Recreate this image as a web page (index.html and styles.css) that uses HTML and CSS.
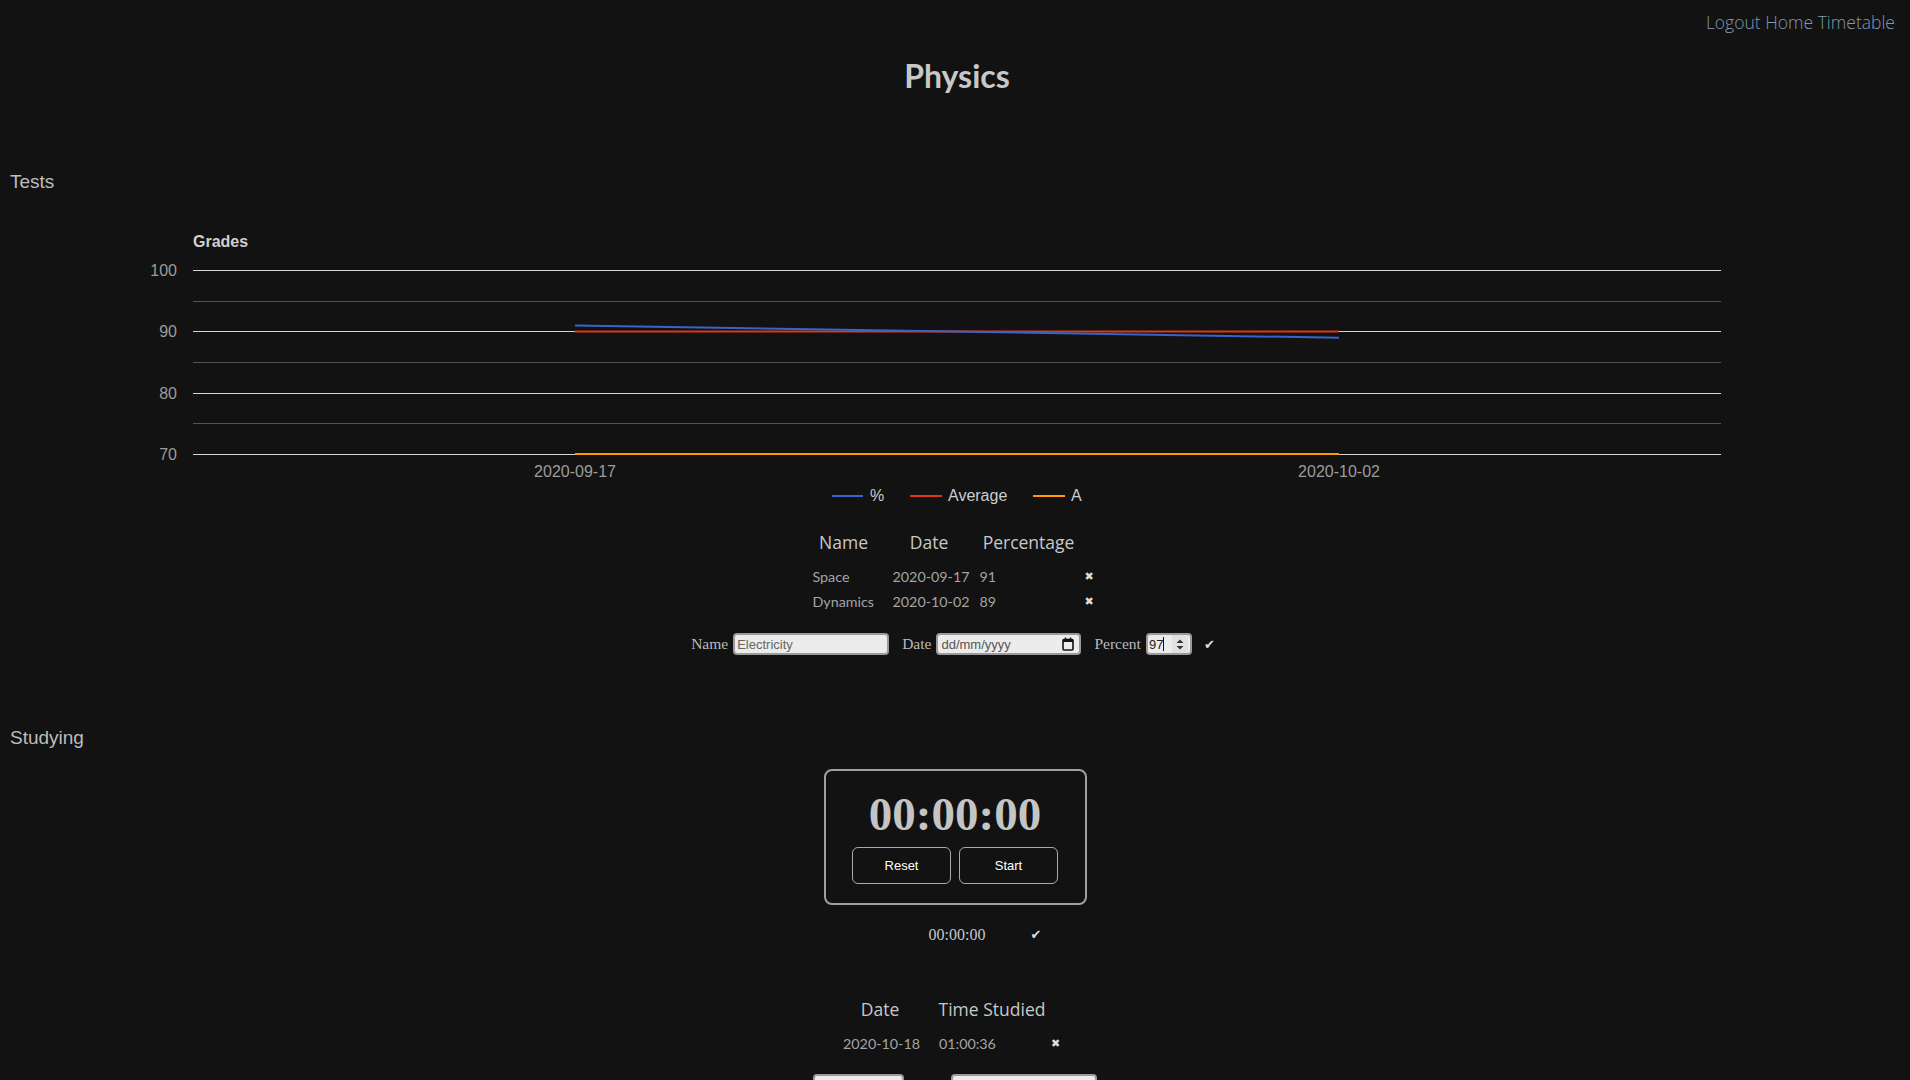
FILE: index.html
```html
<!DOCTYPE html>
<html lang="en">
<head>
<meta charset="utf-8">
<title>Physics</title>
<link rel="stylesheet" href="styles.css">
</head>
<body>
<nav class="topnav"><a href="#">Logout</a> <a href="#">Home</a> <a href="#">Timetable</a></nav>
<h1 class="title">Physics</h1>

<section class="tests">
  <h2 class="section-title">Tests</h2>
  <svg class="chart" width="1910" height="315" viewBox="0 0 1910 315">
    <text x="193" y="47" class="chart-title">Grades</text>
    <g class="grid-major">
      <line x1="193" x2="1721" y1="70.5" y2="70.5"/>
      <line x1="193" x2="1721" y1="131.5" y2="131.5"/>
      <line x1="193" x2="1721" y1="193.5" y2="193.5"/>
      <line x1="193" x2="1721" y1="254.5" y2="254.5"/>
    </g>
    <g class="grid-minor">
      <line x1="193" x2="1721" y1="101.5" y2="101.5"/>
      <line x1="193" x2="1721" y1="162.5" y2="162.5"/>
      <line x1="193" x2="1721" y1="223.5" y2="223.5"/>
    </g>
    <g class="axis-label">
      <text x="177" y="76" text-anchor="end">100</text>
      <text x="177" y="137" text-anchor="end">90</text>
      <text x="177" y="199" text-anchor="end">80</text>
      <text x="177" y="260" text-anchor="end">70</text>
      <text x="575" y="277" text-anchor="middle">2020-09-17</text>
      <text x="1339" y="277" text-anchor="middle">2020-10-02</text>
    </g>
    <line class="series-a" x1="575" x2="1339" y1="254" y2="254"/>
    <line class="series-avg" x1="575" x2="1339" y1="131.5" y2="131.5"/>
    <line class="series-pct" x1="575" x2="1339" y1="125.5" y2="137.7"/>
    <g class="legend">
      <line class="series-pct" x1="832" x2="863" y1="296" y2="296"/>
      <text x="870" y="301">%</text>
      <line class="series-avg" x1="910" x2="942" y1="296" y2="296"/>
      <text x="948" y="301">Average</text>
      <line class="series-a" x1="1033" x2="1065" y1="296" y2="296"/>
      <text x="1071" y="301">A</text>
    </g>
  </svg>

  <table class="data-table grades">
    <thead>
      <tr><th class="c-name">Name</th><th class="c-date">Date</th><th class="c-pct">Percentage</th><th class="c-del"></th></tr>
    </thead>
    <tbody>
      <tr><td>Space</td><td>2020-09-17</td><td>91</td><td class="del">&#10006;</td></tr>
      <tr><td>Dynamics</td><td>2020-10-02</td><td>89</td><td class="del">&#10006;</td></tr>
    </tbody>
  </table>

  <form class="add-row">
    <label class="field"><span class="lbl">Name</span><input class="txt name-input" type="text" placeholder="Electricity"></label>
    <label class="field"><span class="lbl">Date</span>
      <span class="fake-input date-input"><span class="ph">dd/mm/yyyy</span>
        <svg class="cal" width="12" height="14" viewBox="0 0 12 14"><rect x="1" y="2.5" width="10" height="10.5" rx="1" fill="none" stroke="#111" stroke-width="1.6"/><rect x="1" y="2.5" width="10" height="2.5" fill="#111"/><line x1="3.5" y1="0.5" x2="3.5" y2="3" stroke="#111" stroke-width="1.4"/><line x1="8.5" y1="0.5" x2="8.5" y2="3" stroke="#111" stroke-width="1.4"/></svg>
      </span>
    </label>
    <label class="field"><span class="lbl">Percent</span>
      <span class="fake-input num-input"><span class="val">97</span><span class="caret"></span>
        <span class="spin"><svg width="8" height="11" viewBox="0 0 8 11"><path d="M4 0.5 L7.5 4 L0.5 4 Z M4 10.5 L7.5 7 L0.5 7 Z" fill="#333"/></svg></span>
      </span>
    </label>
    <span class="tick submit">&#10004;</span>
  </form>
</section>

<section class="studying">
  <h2 class="section-title studying-title">Studying</h2>
  <div class="timer">
    <div class="timer-display">00:00:00</div>
    <div class="timer-buttons"><button type="button">Reset</button><button type="button">Start</button></div>
  </div>
  <div class="log-row"><span class="spacer"></span><span class="log-time">00:00:00</span><span class="tick log-tick">&#10004;</span></div>

  <table class="data-table sessions">
    <thead>
      <tr><th class="s-date">Date</th><th class="s-time">Time Studied</th><th class="s-del"></th></tr>
    </thead>
    <tbody>
      <tr><td>2020-10-18</td><td>01:00:36</td><td class="del">&#10006;</td></tr>
    </tbody>
  </table>

  <div class="bottom-inputs">
    <span class="box box-small"></span>
    <span class="box box-wide"></span>
  </div>
</section>
</body>
</html>
```

FILE: styles.css
```css
body {
  margin: 0;
  background: #121212;
  color: #cccccc;
  font-family: "Liberation Sans", Arial, sans-serif;
}

.topnav {
  text-align: right;
  padding: 10px 15px 0 0;
  height: 24px;
  line-height: 24px;
  font-family: "Open Sans", "Liberation Sans", sans-serif;
  font-weight: 300;
  font-size: 17.5px;
}
.topnav a {
  color: #7f98b1;
  text-decoration: none;
}

.title {
  margin: 22px 0 0;
  padding-left: 4px;
  text-align: center;
  font-family: Lato, "Liberation Sans", sans-serif;
  font-weight: 700;
  font-size: 32px;
  line-height: 40px;
  color: #c8c8c8;
}

.section-title {
  margin: 74px 0 0;
  padding-left: 10px;
  font-family: "Liberation Sans", Arial, sans-serif;
  font-weight: 400;
  font-size: 19px;
  line-height: 24px;
  color: #bdbdbd;
}
.studying-title {
  margin-top: 70px;
}

/* chart */
.chart {
  display: block;
  margin-top: 6px;
  font-family: "Liberation Sans", Arial, sans-serif;
}
.chart-title {
  font-size: 16px;
  font-weight: 700;
  fill: #cfcfcf;
}
.grid-major line {
  stroke: #d6d6d6;
  stroke-width: 1;
}
.grid-minor line {
  stroke: #555555;
  stroke-width: 1;
}
.axis-label text {
  font-size: 16px;
  fill: #9c9c9c;
}
.legend text {
  font-size: 16px;
  fill: #cccccc;
}
.series-pct { stroke: #3366cc; stroke-width: 2; }
.series-avg { stroke: #dc3912; stroke-width: 2; }
.series-a { stroke: #ff9900; stroke-width: 2; }

/* tables */
.data-table {
  margin: 12px auto 0;
  border-collapse: collapse;
  table-layout: fixed;
}
.data-table th {
  box-sizing: border-box;
  padding: 0 12px 7px 2px;
  font-family: "Open Sans", "Liberation Sans", sans-serif;
  font-weight: 400;
  font-size: 17.5px;
  line-height: 30px;
  color: #c8c8c8;
  text-align: center;
  white-space: nowrap;
}
.data-table td {
  padding: 0 12px 0 2px;
  font-family: Lato, "Liberation Sans", sans-serif;
  font-size: 14.3px;
  line-height: 25px;
  height: 25px;
  color: #a4a4a4;
  text-align: left;
  white-space: nowrap;
}
.data-table td.del {
  padding: 0 0 0 3px;
  font-family: "DejaVu Sans", sans-serif;
  font-size: 11px;
  color: #dddddd;
}
.grades { width: 289px; }
.grades .c-name { width: 80px; padding: 0 16px 7px 2px; }
.grades .c-date { width: 87px; }
.grades .c-pct { width: 104px; padding: 0 4px 7px 2px; }
.grades .c-del { width: 18px; padding: 0; }

.sessions { width: 228px; margin-top: 47px; }
.sessions .s-date { width: 96px; padding: 0 20px 7px 2px; }
.sessions .s-time { width: 110px; padding: 0 0 7px 0; }
.sessions .s-del { width: 22px; padding: 0; }
.sessions td.del { padding-left: 4px; }

/* add row form */
.add-row {
  display: flex;
  justify-content: center;
  align-items: center;
  margin: 18px 0 0;
  padding-right: 4px;
  height: 24px;
  font-family: "Liberation Serif", "Times New Roman", serif;
  font-size: 15.5px;
  color: #bbbbbb;
}
.field {
  display: flex;
  align-items: center;
}
.field + .field {
  margin-left: 13px;
}
.lbl {
  margin-right: 5px;
}
.txt,
.fake-input {
  box-sizing: border-box;
  height: 22px;
  background: #ececec;
  border: 2px solid #9a9a9a;
  border-radius: 4px;
  font-family: "Liberation Sans", Arial, sans-serif;
  font-size: 13px;
  color: #222;
}
.txt {
  width: 156px;
  padding: 0 2px;
  outline: none;
}
.txt::placeholder {
  color: #666;
}
.fake-input {
  display: flex;
  align-items: center;
  position: relative;
}
.date-input {
  width: 145px;
  padding: 0 5px 0 3px;
  justify-content: space-between;
}
.date-input .ph {
  color: #555;
}
.num-input {
  width: 46px;
  padding: 0 2px 0 1px;
}
.num-input .val {
  color: #222;
}
.caret {
  width: 1px;
  height: 14px;
  background: #111;
}
.spin {
  margin-left: auto;
  width: 16px;
  height: 18px;
  background: #e2e2e2;
  display: flex;
  align-items: center;
  justify-content: center;
}
.spin svg { display: block; }
.tick {
  font-family: "DejaVu Sans", sans-serif;
  font-size: 13px;
  color: #dddddd;
}
.submit {
  margin-left: 12px;
}

/* timer */
.timer {
  box-sizing: border-box;
  width: 263px;
  margin: 19px auto 0;
  border: 2px solid #a0a0a0;
  border-radius: 8px;
  padding: 15px 0 19px;
}
.timer-display {
  font-family: "Liberation Serif", "Times New Roman", serif;
  font-weight: 700;
  font-size: 47px;
  line-height: 56px;
  color: #c4c4c4;
  text-align: center;
}
.timer-buttons {
  display: flex;
  justify-content: center;
  gap: 8px;
  margin-top: 5px;
}
.timer-buttons button {
  box-sizing: border-box;
  width: 99px;
  height: 37px;
  background: transparent;
  border: 1.5px solid #aaaaaa;
  border-radius: 6px;
  color: #ffffff;
  font-family: "Liberation Sans", Arial, sans-serif;
  font-size: 13px;
}

.log-row {
  display: grid;
  grid-template-columns: 1fr auto 1fr;
  align-items: center;
  margin-top: 18px;
  padding-left: 4px;
  line-height: 24px;
}
.log-time {
  font-family: "Liberation Serif", "Times New Roman", serif;
  font-size: 16px;
  color: #c8c8c8;
}
.log-tick {
  margin-left: 45px;
}

.bottom-inputs {
  display: flex;
  justify-content: center;
  gap: 47px;
  margin-top: 18px;
}
.box {
  box-sizing: border-box;
  height: 22px;
  background: #ececec;
  border: 2px solid #9a9a9a;
  border-radius: 4px;
}
.box-small { width: 91px; }
.box-wide { width: 146px; }
```
